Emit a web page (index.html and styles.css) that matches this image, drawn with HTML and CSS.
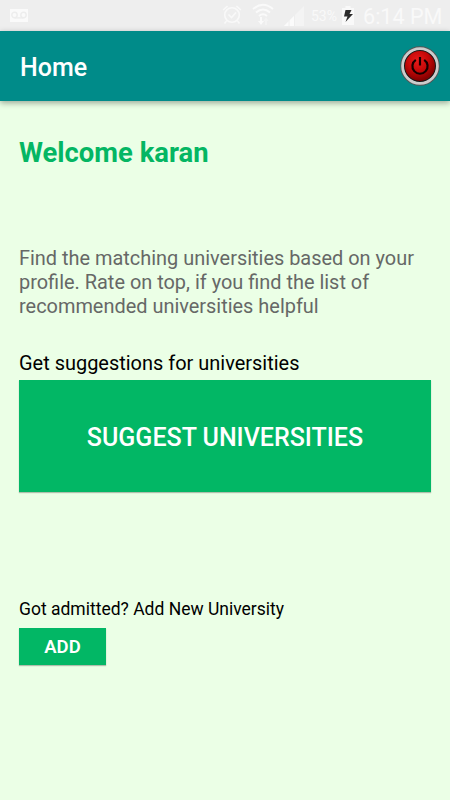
FILE: index.html
```html
<!DOCTYPE html>
<html lang="en">
<head>
<meta charset="utf-8">
<title>Home</title>
<link rel="stylesheet" href="styles.css">
</head>
<body>
<div class="status">
  <svg class="voicemail" width="18" height="13" viewBox="0 0 18 13"><path fill="#fafafa" d="M0 0h18v13H0z"/><g fill="none" stroke="#ededed" stroke-width="1.4"><circle cx="4.5" cy="6" r="2.7"/><circle cx="13.5" cy="6" r="2.7"/><path d="M4.5 8.9h9"/></g></svg>
  <svg class="alarm" width="20" height="22" viewBox="0 0 20 22"><g fill="none" stroke="#f9f9f9" stroke-width="1.6"><circle cx="10" cy="11" r="7.3"/><path d="M6.5 10.5l3 3 4.5-5M1.2 6l4.3-4M18.8 6l-4.3-4M4.5 17L2.5 19.5M15.5 17l2 2.5"/></g></svg>
  <svg class="wifi" width="22" height="24" viewBox="0 0 22 24"><g fill="none" stroke="#fafafa" stroke-width="2"><path d="M1 6Q11-2.5 21 6M4 9.5Q11 3.5 18 9.5M7 13Q11 9.5 15 13"/></g><path fill="#fafafa" d="M8 14h2v4h2l-3 4-3-4h2z"/><path fill="#f3f3f3" d="M14 14l2.500 4h-1.500v4h-2v-4h-1.500z"/></svg>
  <svg class="signal" width="20" height="20" viewBox="0 0 20 20"><path fill="#f4f4f4" d="M20 0v20H0z"/><path fill="#fbfbfb" d="M10 10v10H0z"/><path stroke="#eee" d="M5 12v8M10.500 8v12"/></svg>
  <span class="percent">53%</span>
  <svg class="battery" width="12" height="19" viewBox="0 0 12 19"><path fill="#f9f9f9" d="M3.500 0h5v2H12v17H0V2h3.500z"/><path fill="#2b2b2b" d="M3.500 4h6L7.500 8H11l-7.500 8 2-5.500H2z"/></svg>
  <span class="clock">6:14 PM</span>
</div>
<header class="appbar">
  <h1>Home</h1>
  <svg class="power" width="40" height="40" viewBox="0 0 40 40">
    <defs><radialGradient id="red" cx=".42" cy=".32" r=".65"><stop offset="0" stop-color="#e91b1b"/><stop offset=".55" stop-color="#c40808"/><stop offset="1" stop-color="#840000"/></radialGradient></defs>
    <circle cx="20" cy="20" r="18" fill="#171717" stroke="#555" stroke-width="3.400"/>
    <circle cx="20" cy="20" r="17.400" fill="none" stroke="#ccc" stroke-width="2.800"/>
    <circle cx="20" cy="20" r="15" fill="url(#red)"/>
    <path d="M15.800 13.800A7.600 7.600 0 1 0 24.200 13.800M20 11v8.500" fill="none" stroke="#170000" stroke-width="2.200"/>
  </svg>
</header>
<main>
  <h2>Welcome karan</h2>
  <p class="intro">Find the matching universities based on your<br>profile. Rate on top, if you find the list of<br>recommended universities helpful</p>
  <p class="label">Get suggestions for universities</p>
  <button class="suggest">SUGGEST UNIVERSITIES</button>
  <p class="admitted">Got admitted? Add New University</p>
  <button class="add">ADD</button>
</main>
</body>
</html>
```
FILE: styles.css
```css
* { box-sizing: border-box; margin: 0; padding: 0; }
body { width: 450px; height: 800px; overflow: hidden; background: #ebffe6; font-family: Roboto, sans-serif; white-space: nowrap; }
.status { display: flex; height: 31px; background: #eee; color: #f9f9f9; }
.voicemail { margin: 9px 0 0 10px; }
.alarm { margin: 4px 0 0 194px; }
.wifi { margin: 3px 0 0 10px; }
.signal { margin: 6px 0 0 10px; }
.percent { width: 27px; margin: 8px 0 0 7px; font-size: 14px; line-height: 17px; }
.battery { margin: 6px 0 0 4px; }
.clock { margin: 4px 0 0 9px; font-size: 21.600px; line-height: 26px; }
.appbar { position: relative; display: flex; justify-content: space-between; height: 70px; padding: 0 10px 0 20px; background: #008b89; box-shadow: 0 2px 6px rgba(0,0,0,.35); }
h1 { margin-top: 22px; color: #fff; font-size: 25px; font-weight: 500; line-height: 30px; }
.power { margin-top: 15px; }
main { display: flex; flex-direction: column; align-items: flex-start; padding: 36px 19px 0; }
h2 { color: #04b663; font-size: 27.400px; font-weight: 700; line-height: 32px; }
.intro { height: 72px; margin-top: 78px; color: #666866; font-size: 19.930px; line-height: 23.800px; }
.label { margin-top: 31px; color: #000; font-size: 19.970px; line-height: 26px; }
button { border: 0; background: #02b765; color: #fff; font-family: inherit; font-weight: 500; box-shadow: 0 1px 1px rgba(0,0,0,.25); }
.suggest { width: 412px; height: 112px; margin-top: 4px; padding-top: 2px; font-size: 25px; }
.admitted { margin-top: 106px; color: #000; font-size: 17.500px; line-height: 22px; }
.add { width: 87px; height: 37px; margin-top: 8px; padding-top: 1px; font-size: 18.500px; font-weight: 600; }
```
